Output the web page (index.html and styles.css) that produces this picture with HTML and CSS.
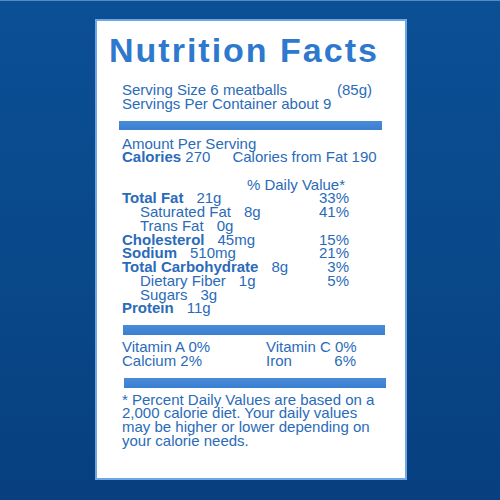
FILE: index.html
```html
<!DOCTYPE html>
<html lang="en">
<head>
  <meta charset="UTF-8">
  <title>Nutrition Facts</title>
  <link rel="stylesheet" href="styles.css">
</head>
<body>
  <div class="label-card">
    <h1 class="title">Nutrition Facts</h1>

    <div class="content">
      <div class="serving">
        <div class="row"><span>Serving Size 6 meatballs</span><span class="weight">(85g)</span></div>
        <div class="row">Servings Per Container about 9</div>
      </div>

      <div class="bar bar-one"></div>

      <div class="amount">
        <div class="row">Amount Per Serving</div>
        <div class="row"><b>Calories</b>&nbsp;270<span class="fat-cal">Calories from Fat 190</span></div>
      </div>

      <div class="dv-head">% Daily Value*</div>

      <div class="nutrients">
        <div class="row"><b>Total Fat</b><span class="amt">21g</span><span class="pct">33%</span></div>
        <div class="row sub"><span>Saturated Fat</span><span class="amt">8g</span><span class="pct">41%</span></div>
        <div class="row sub"><span>Trans Fat</span><span class="amt">0g</span></div>
        <div class="row"><b>Cholesterol</b><span class="amt">45mg</span><span class="pct">15%</span></div>
        <div class="row"><b>Sodium</b><span class="amt">510mg</span><span class="pct">21%</span></div>
        <div class="row"><b>Total Carbohydrate</b><span class="amt">8g</span><span class="pct">3%</span></div>
        <div class="row sub"><span>Dietary Fiber</span><span class="amt">1g</span><span class="pct">5%</span></div>
        <div class="row sub"><span>Sugars</span><span class="amt">3g</span></div>
        <div class="row"><b>Protein</b><span class="amt">11g</span></div>
      </div>

      <div class="bar bar-two"></div>

      <div class="vitamins">
        <span>Vitamin A 0%</span>
        <span class="vit-right">Vitamin C 0%</span>
        <span>Calcium 2%</span>
        <span class="vit-right split"><span>Iron</span><span>6%</span></span>
      </div>

      <div class="bar bar-three"></div>

      <p class="footnote">
        * Percent Daily Values are based on a 2,000 calorie diet. Your daily values
        may be higher or lower depending on your calorie needs.
      </p>
    </div>
  </div>
</body>
</html>
```

FILE: styles.css
```css
body {
  margin: 0;
  width: 500px;
  height: 500px;
  overflow: hidden;
  background: linear-gradient(180deg, #0b4f95 0%, #094889 55%, #073f7f 100%);
  border-top: 1px solid #5a88c2;
  box-sizing: border-box;
  font-family: "Liberation Sans", Arial, Helvetica, sans-serif;
  color: #2a6bb9;
}

.label-card {
  box-sizing: border-box;
  width: 312px;
  height: 461px;
  margin: 18px 0 0 95px;
  background: #fff;
  border: 2px solid #6ea7e6;
  padding: 9px 20px 0 23px;
}

.title {
  margin: 0 0 0 -11px;
  font-size: 34px;
  line-height: 40px;
  font-weight: bold;
  letter-spacing: 2px;
  color: #2e78cd;
  white-space: nowrap;
}

.content {
  font-size: 15px;
  line-height: 13.75px;
}

.row {
  display: flex;
  align-items: baseline;
  padding-left: 2px;
  white-space: nowrap;
}

.serving {
  margin-top: 13px;
}

.weight {
  margin-left: auto;
  margin-right: 13px;
}

.bar {
  height: 9px;
  background: linear-gradient(180deg, #4a8bd8, #3a7fd1);
}

.bar-one {
  margin: 10px 3px 0 -1px;
}

.bar-two {
  margin: 10px 0 0 3px;
  height: 10px;
}

.bar-three {
  margin: 10px -1px 0 4px;
  height: 10px;
}

.amount {
  margin-top: 7px;
}

.fat-cal {
  margin-left: 22px;
}

.dv-head {
  margin-top: 13.5px;
  padding-right: 40px;
  text-align: right;
}

.nutrients .row {
  padding-right: 36px;
}

.sub {
  padding-left: 20px;
}

.amt {
  margin-left: 13px;
}

.pct {
  margin-left: auto;
}

.vitamins {
  display: grid;
  grid-template-columns: 144px 90px;
  margin-top: 5px;
  padding-left: 2px;
  white-space: nowrap;
}

.split {
  display: flex;
  justify-content: space-between;
}

.footnote {
  margin: 5px 0 0;
  padding-left: 2px;
  padding-right: 6px;
}
```
